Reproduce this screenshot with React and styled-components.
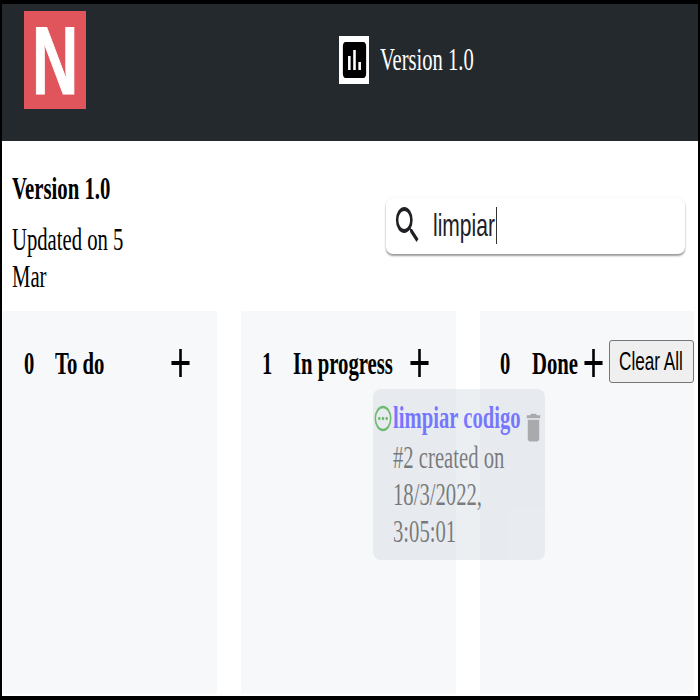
import React from "react";
import styled, { createGlobalStyle } from "styled-components";

const SQUEEZE = 0.643;

const GlobalStyle = createGlobalStyle`
  * { box-sizing: border-box; }
  body { margin: 0; background: #fff; font-family: "Liberation Serif", "Times New Roman", serif; }
`;

const Frame = styled.div`
  position: relative;
  width: 700px;
  height: 700px;
  overflow: hidden;
  display: flex;
  flex-direction: column;
  background: #fff;
  border: solid #000;
  border-width: 4px 2px 4px 2px;
`;

const Header = styled.header`
  flex: none;
  height: 137px;
  display: flex;
  align-items: flex-start;
  padding-left: 22px;
  background: #24292e;
`;

const Logo = styled.div`
  width: 62px;
  height: 98px;
  margin-top: 7px;
  display: flex;
  justify-content: center;
  background: #e0555b;
  color: #fff;
`;

const LogoLetter = styled.span`
  font: bold 97px/98px "Liberation Sans", Arial, sans-serif;
  -webkit-text-stroke: 1px #fff;
  transform: translateY(1px) scaleX(0.66);
`;

const Project = styled.div`
  display: flex;
  align-items: center;
  gap: 11px;
  margin: 32px 0 0 253px;
  color: #fff;
`;

const ProjectIcon = styled.span`
  display: block;
  width: 30px;
  height: 48px;
  background: #fff;
  color: #000;
`;

const Text = styled.span`
  display: block;
  flex: none;
  width: ${(p) => p.$w}px;
  font-size: 32px;
  line-height: 37px;
  font-weight: ${(p) => (p.$bold ? 700 : 400)};
  color: ${(p) => p.$color || "inherit"};
  white-space: pre;
  transform: scaleX(${(p) => p.$squeeze || SQUEEZE});
  transform-origin: left center;
`;

const ProjectName = styled(Text)`
  margin-bottom: 2px;
`;

const Icon = styled.svg`
  display: block;
  flex: none;
  width: ${(p) => p.$w || 31}px;
  height: ${(p) => p.$h || 48}px;
  fill: currentColor;
`;

const Info = styled.section`
  flex: none;
  height: 170px;
  display: flex;
  justify-content: space-between;
  padding: 29px 13px 0 10px;
`;

const Meta = styled.div`
  display: flex;
  flex-direction: column;
  gap: 14px;
`;

const Search = styled.label`
  width: 299px;
  height: 56px;
  margin-top: 28px;
  display: flex;
  align-items: center;
  padding: 0 0 2px 6px;
  border-radius: 7px;
  background: #fff;
  color: #202124;
  box-shadow: 0 2px 2px rgba(0, 0, 0, 0.38), 0 0 3px rgba(0, 0, 0, 0.06);
`;

const Query = styled(Text)`
  margin-left: 10px;
  font-family: "Liberation Sans", Arial, sans-serif;
`;

const Caret = styled.span`
  width: 1px;
  height: 37px;
  background: #333;
`;

const Board = styled.main`
  flex: 1;
  display: grid;
  grid-template-columns: 214px 215px 214px;
  column-gap: 24px;
  padding: 0 0 2px 1px;
`;

const Column = styled.section`
  background: #f6f8fa;
`;

const ColumnHead = styled.div`
  display: flex;
  align-items: center;
  height: 48px;
  margin-top: 28px;
  padding-left: ${(p) => p.$inset}px;
`;

const Count = styled(Text)`
  margin-right: ${(p) => p.$gap}px;
`;

const Add = styled.button`
  flex: none;
  padding: 0;
  border: 0;
  background: none;
  color: #000;
  margin-left: ${(p) => p.$gap}px;
`;

const ClearButton = styled.button`
  flex: none;
  width: 85px;
  height: 43px;
  margin-bottom: 3px;
  padding: 0 0 1px 9px;
  border: 1px solid #767676;
  border-radius: 3px;
  background: #efefef;
  color: #000;
  text-align: left;
`;

const ClearLabel = styled(Text)`
  font: 26.7px/37px "Liberation Sans", Arial, sans-serif;
`;

const DraggedCard = styled.article`
  position: absolute;
  left: 371px;
  top: 385px;
  width: 172px;
  height: 171px;
  display: flex;
  align-items: flex-start;
  padding-top: 10px;
  border-radius: 8px;
  background: #dce2e9;
  opacity: 0.55;
`;

const CardBody = styled.div`
  display: flex;
  flex-direction: column;
  gap: 3px;
  width: 128px;
`;

const Status = styled.span`
  margin: 6px 1px 0 1px;
  color: #008c00;
`;

const Trash = styled.span`
  margin: 10px 0 0 1px;
  color: #6c6c6c;
`;

const GlyphIcon = ({ d, w, h }) => (
  <Icon $w={w} $h={h} viewBox="0 0 24 24" preserveAspectRatio="none">
    <path d={d} />
  </Icon>
);

const paths = {
  chart:
    "M19 3H5c-1.1 0-2 .9-2 2v14c0 1.1.9 2 2 2h14c1.1 0 2-.9 2-2V5c0-1.1-.9-2-2-2zM9 17H7v-7h2v7zm4 0h-2V7h2v10zm4 0h-2v-4h2v4z",
  search:
    "M15.5 14h-.79l-.28-.27A6.471 6.471 0 0 0 16 9.5 6.5 6.5 0 1 0 9.5 16c1.61 0 3.09-.59 4.23-1.57l.27.28v.79l5 4.99L20.49 19l-4.99-5zm-6 0C7.01 14 5 11.99 5 9.5S7.01 5 9.5 5 14 7.01 14 9.5 11.99 14 9.5 14z",
  add: "M19 13h-6v6h-2v-6H5v-2h6V5h2v6h6v2z",
  trash: "M6 19c0 1.1.9 2 2 2h8c1.1 0 2-.9 2-2V7H6v12zM19 4h-3.5l-1-1h-5l-1 1H5v2h14V4z",
};

const columns = [
  { count: 0, title: "To do", w: 49, gap: 61, inset: 21, countGap: 21 },
  { count: 1, title: "In progress", w: 100, gap: 11, inset: 21, countGap: 21 },
  { count: 0, title: "Done", w: 46, gap: 0, inset: 20, countGap: 22, clear: true },
];

export default function App() {
  return (
    <>
      <GlobalStyle />
      <Frame>
        <Header>
          <Logo>
            <LogoLetter>N</LogoLetter>
          </Logo>
          <Project>
            <ProjectIcon>
              <GlyphIcon d={paths.chart} />
            </ProjectIcon>
            <ProjectName $w={96}>Version 1.0</ProjectName>
          </Project>
        </Header>
        <Info>
          <Meta>
            <Text $w={112} $bold $squeeze={0.648}>Version 1.0</Text>
            <Text $w={112} $squeeze={0.646}>{"Updated on 5\nMar"}</Text>
          </Meta>
          <Search>
            <GlyphIcon d={paths.search} />
            <Query $w={63} $squeeze={0.657}>limpiar</Query>
            <Caret />
          </Search>
        </Info>
        <Board>
          {columns.map((c) => (
            <Column key={c.title}>
              <ColumnHead $inset={c.inset}>
                <Count $w={10} $gap={c.countGap} $bold>{c.count}</Count>
                <Text $w={c.w} $bold $squeeze={0.647}>{c.title}</Text>
                <Add $gap={c.gap} aria-label="Add">
                  <GlyphIcon d={paths.add} />
                </Add>
                {c.clear && (
                  <ClearButton>
                    <ClearLabel $w={64}>Clear All</ClearLabel>
                  </ClearButton>
                )}
              </ColumnHead>
            </Column>
          ))}
        </Board>
        <DraggedCard>
          <Status>
            <Icon $w={18} $h={27} viewBox="0 0 18 18" preserveAspectRatio="none">
              <circle cx="9" cy="9" r="7.7" fill="none" stroke="currentColor" strokeWidth="1.6" />
              <ellipse cx="5.3" cy="9" rx="1.3" ry="1.2" />
              <ellipse cx="9" cy="9" rx="1.3" ry="1.2" />
              <ellipse cx="12.7" cy="9" rx="1.3" ry="1.2" />
            </Icon>
          </Status>
          <CardBody>
            <Text $w={128} $bold $color="#0c0cff" $squeeze={0.646}>limpiar codigo</Text>
            <Text $w={128} $color="#111" $squeeze={0.646}>{"#2 created on\n18/3/2022,\n3:05:01"}</Text>
          </CardBody>
          <Trash>
            <GlyphIcon d={paths.trash} w={23} h={37} />
          </Trash>
        </DraggedCard>
      </Frame>
    </>
  );
}
